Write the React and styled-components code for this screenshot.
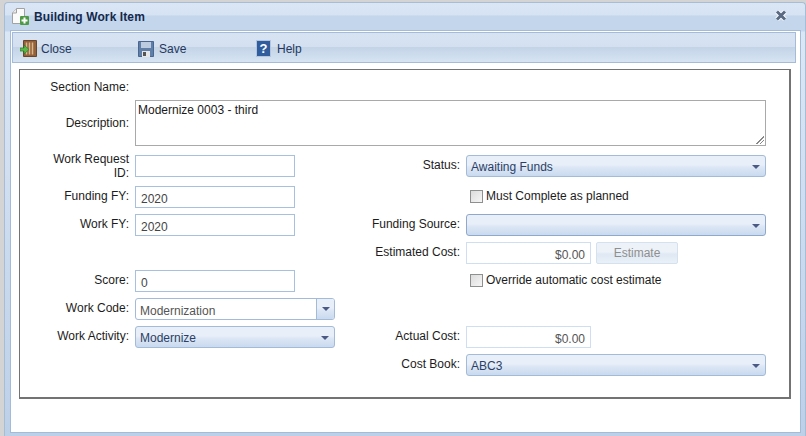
import React from "react";
import styled, { createGlobalStyle } from "styled-components";

const GlobalStyle = createGlobalStyle`
  html, body {
    margin: 0;
    padding: 0;
    width: 806px;
    height: 436px;
    overflow: hidden;
    background: #d4d4d4;
    font-family: "Liberation Sans", Arial, sans-serif;
    font-size: 12px;
    color: #1a1a1a;
  }
`;

const DocIcon = () => (
  <svg width="18" height="18" viewBox="0 0 18 18">
    <path d="M.5 5L4.500.5h8v15H.5z" fill="#fbfbfb" stroke="#a2a2a2" />
    <path d="M.5 5h4V.5" fill="#ececec" stroke="#a2a2a2" />
    <rect x="8" y="8" width="9" height="9" rx="1" fill="#4f9a45" />
    <path d="M12.500 9.500v6M9.500 12.500h6" stroke="#fff" strokeWidth="2" />
  </svg>
);

const DoorIcon = () => (
  <svg width="17" height="17" viewBox="0 0 17 17">
    <path d="M3.500.5h13v16h-13z" fill="#94613a" stroke="#6b4527" />
    <path d="M6.500 2.500v12M9.500 2.500v12M12.500 2.500v12" stroke="#d9b78e" strokeWidth="1.500" />
    <path d="M0 8h4V5l5 4.500L4 14v-3H0z" fill="#58b848" stroke="#2f7a28" strokeWidth=".7" />
  </svg>
);

const SaveIcon = () => (
  <svg width="16" height="16" viewBox="0 0 16 16">
    <path d="M.5.500h15v15H.5z" fill="#607fa8" stroke="#48668f" />
    <rect x="3" y="1" width="10" height="6" fill="#bccbe0" />
    <rect x="4" y="10" width="8" height="6" fill="#e6e6e6" />
    <rect x="5" y="11" width="3" height="4" fill="#555" />
  </svg>
);

const HelpIcon = () => (
  <svg width="16" height="17" viewBox="0 0 16 17">
    <rect x=".5" y=".5" width="14" height="16" fill="#2f5d9e" stroke="#b4c5dc" />
    <text x="7.500" y="13" textAnchor="middle" fill="#fff" fontSize="13" fontWeight="700" fontFamily="Liberation Sans">?</text>
  </svg>
);

const Arrow = () => (
  <svg width="8" height="4" viewBox="0 0 8 4">
    <path d="M0 0h8L4 4z" fill="#4a5a85" />
  </svg>
);

const CloseX = () => (
  <CloseIcon width="12" height="11" viewBox="0 0 12 11">
    <path d="M2 1.500l8 8M10 1.500l-8 8" stroke="#fff" strokeWidth="4.600" />
    <path d="M2 1.500l8 8M10 1.500l-8 8" stroke="#5a6a82" strokeWidth="3" />
  </CloseIcon>
);

export default function App() {
  return (
    <>
      <GlobalStyle />
      <Window>
        <TitleBar>
          <TitleLeft>
            <DocIcon />
            <Title>Building Work Item</Title>
          </TitleLeft>
          <CloseX />
        </TitleBar>
        <Body>
          <Toolbar>
            <ToolButton $width={118} $gap={4}><DoorIcon />Close</ToolButton>
            <ToolButton $width={118}><SaveIcon />Save</ToolButton>
            <ToolButton><HelpIcon />Help</ToolButton>
          </Toolbar>
          <Panel>
            <SectionRow>
              <Label>Section Name:</Label>
            </SectionRow>
            <DescriptionRow>
              <Label>Description:</Label>
              <TextArea>Modernize 0003 - third</TextArea>
            </DescriptionRow>
            <Grid>
              <GridLabel $wrapped>Work Request ID:</GridLabel>
              <Cell><TextInput /></Cell>
              <GridLabel>Status:</GridLabel>
              <Cell><Select>Awaiting Funds<Arrow /></Select></Cell>

              <GridLabel>Funding FY:</GridLabel>
              <Cell><TextInput>2020</TextInput></Cell>
              <GridLabel />
              <Cell><Check><Box />Must Complete as planned</Check></Cell>

              <GridLabel>Work FY:</GridLabel>
              <Cell><TextInput>2020</TextInput></Cell>
              <GridLabel>Funding Source:</GridLabel>
              <Cell><Select $focused><span /><Arrow /></Select></Cell>

              <GridLabel />
              <Cell />
              <GridLabel>Estimated Cost:</GridLabel>
              <Cell>
                <MoneyInput>$0.00</MoneyInput>
                <EstimateButton>Estimate</EstimateButton>
              </Cell>

              <GridLabel>Score:</GridLabel>
              <Cell><TextInput>0</TextInput></Cell>
              <GridLabel />
              <Cell><Check><Box />Override automatic cost estimate</Check></Cell>

              <GridLabel>Work Code:</GridLabel>
              <Cell>
                <Combo>
                  <ComboText>Modernization</ComboText>
                  <ComboTrigger><Arrow /></ComboTrigger>
                </Combo>
              </Cell>
              <GridLabel />
              <Cell />

              <GridLabel>Work Activity:</GridLabel>
              <Cell><Select $short>Modernize<Arrow /></Select></Cell>
              <GridLabel>Actual Cost:</GridLabel>
              <Cell><MoneyInput>$0.00</MoneyInput></Cell>

              <GridLabel />
              <Cell />
              <GridLabel>Cost Book:</GridLabel>
              <Cell><Select>ABC3<Arrow /></Select></Cell>
            </Grid>
          </Panel>
        </Body>
      </Window>
    </>
  );
}

const Window = styled.div`
  box-sizing: border-box;
  width: 802px;
  height: 434px;
  margin: 2px 0 0 4px;
  padding: 0 4px 3px 5px;
  background: linear-gradient(#dbe6f5, #d6e3f3 12px, #c3d6ec 13px, #c3d6ec 28px, #dce7f5 29px, #bcd0e8 100%);
  border: 1px solid #a9bcd6;
  border-bottom: 0;
  border-radius: 4px 4px 0 0;
  display: flex;
  flex-direction: column;
`;

const TitleBar = styled.div`
  height: 27px;
  flex: none;
  display: flex;
  align-items: center;
  justify-content: space-between;
  padding: 0 14px 0 2px;
  box-sizing: border-box;
`;

const TitleLeft = styled.div`
  display: flex;
  align-items: center;
  gap: 4px;
`;

const Title = styled.div`
  font-weight: 700;
  font-size: 12px;
  color: #15294d;
  letter-spacing: 0.1px;
`;

const CloseIcon = styled.svg`
  margin-top: -2px;
`;

const Body = styled.div`
  flex: 1;
  box-sizing: border-box;
  background: #fff;
  border: 1px solid #a3bbd9;
  padding: 1px;
  min-height: 0;
`;

const Toolbar = styled.div`
  box-sizing: border-box;
  width: 784px;
  height: 31px;
  display: flex;
  align-items: center;
  padding: 2px 0 0 7px;
  background: linear-gradient(#d8e3f2, #d4e0f0 47%, #c4d4e8 50%, #d6e4f2);
  border: 1px solid #a5bbd8;
`;

const ToolButton = styled.div`
  display: flex;
  align-items: center;
  gap: ${(p) => p.$gap || 5}px;
  width: ${(p) => (p.$width ? `${p.$width}px` : "auto")};
  color: #24385e;
`;

const Panel = styled.div`
  box-sizing: border-box;
  width: 772px;
  height: 330px;
  margin: 6px 0 0 7px;
  border: solid #737373;
  border-width: 1px 2px 2px 1px;
  background: #fff;
  padding-top: 10px;
`;

const Label = styled.div`
  text-align: right;
  line-height: 14px;
  color: #1c1c1c;
`;

const GridLabel = styled(Label)`
  padding: ${(p) => (p.$wrapped ? "0 0 0 20px" : "3px 0 0")};
  margin-top: ${(p) => (p.$wrapped ? "-3px" : "0")};
`;

const SectionRow = styled.div`
  width: 109px;
  height: 20px;
`;

const DescriptionRow = styled.div`
  display: grid;
  grid-template-columns: 109px 631px;
  column-gap: 6px;
  align-items: center;
  height: 46px;
`;

const TextArea = styled.div`
  box-sizing: border-box;
  height: 46px;
  padding: 2px;
  border: 1px solid #a9a9a9;
  line-height: 14px;
  background: #fff;
  position: relative;
  &::after {
    content: "";
    position: absolute;
    right: 1px;
    bottom: 1px;
    width: 8px;
    height: 8px;
    background: linear-gradient(135deg, transparent 50%, #888 50%, #888 58%, transparent 58%, transparent 72%, #888 72%, #888 80%, transparent 80%);
  }
`;

const Grid = styled.div`
  display: grid;
  grid-template-columns: 109px 200px 119px 300px;
  grid-template-rows: 31px repeat(7, 28px);
  column-gap: 6px;
  margin-top: 9px;
  align-items: start;
`;

const Cell = styled.div`
  display: flex;
  gap: 5px;
  align-items: flex-start;
`;

const TextInput = styled.div`
  box-sizing: border-box;
  width: 160px;
  height: 22px;
  border: 1px solid #a6c0de;
  padding: 5px 5px 0;
  line-height: 14px;
  color: #444;
  background: #fff;
`;

const MoneyInput = styled.div`
  box-sizing: border-box;
  width: 125px;
  height: 22px;
  border: 1px solid #d0dff0;
  padding: 5px 5px 0;
  text-align: right;
  line-height: 14px;
  color: #555;
  background: #fff;
`;

const EstimateButton = styled.div`
  box-sizing: border-box;
  width: 82px;
  height: 22px;
  border: 1px solid #d5e1ef;
  border-radius: 2px;
  background: linear-gradient(#edf2f9 45%, #dfe8f3 55%, #e9f0f8);
  color: #8f8f8f;
  text-align: center;
  line-height: 21px;
`;

const Select = styled.div`
  box-sizing: border-box;
  width: ${(p) => (p.$short ? "200px" : "300px")};
  height: 22px;
  display: flex;
  align-items: center;
  justify-content: space-between;
  padding: 2px 5px 0 4px;
  border: 1px solid ${(p) => (p.$focused ? "#8fa8cc" : "#a3bad8")};
  border-radius: 3px;
  background: linear-gradient(#e8eff9 45%, #dde7f5 55%, #c9daef);
  color: #2c3f66;
  svg {
    margin-top: -1px;
  }
`;

const Combo = styled.div`
  box-sizing: border-box;
  width: 200px;
  height: 22px;
  display: flex;
  border: 1px solid #a3bad8;
  border-radius: 3px;
  overflow: hidden;
  background: #fff;
`;

const ComboText = styled.div`
  flex: 1;
  padding: 5px 4px 0;
  line-height: 14px;
  color: #555;
`;

const ComboTrigger = styled.div`
  width: 17px;
  display: flex;
  align-items: center;
  justify-content: center;
  border-left: 1px solid #a3bad8;
  background: linear-gradient(#e8eff9 45%, #dde7f5 55%, #c9daef);
`;

const Check = styled.div`
  display: flex;
  align-items: center;
  gap: 3px;
  height: 20px;
  padding-left: 4px;
  color: #1c1c1c;
`;

const Box = styled.span`
  display: block;
  box-sizing: border-box;
  width: 13px;
  height: 13px;
  border: 1px solid #8e8f8f;
  background: linear-gradient(135deg, #dcdcdc, #f6f6f6);
`;
